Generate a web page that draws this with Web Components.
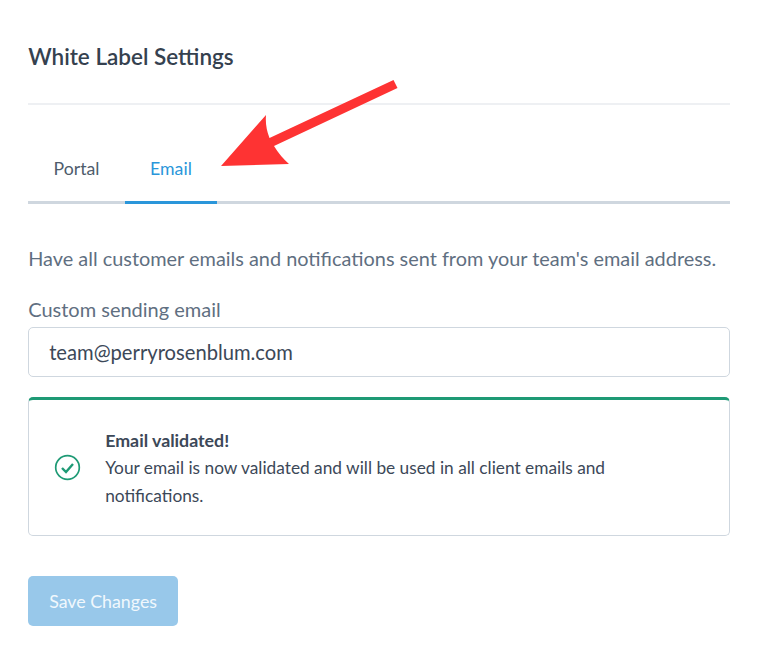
<!DOCTYPE html>
<html>
<head>
<meta charset="utf-8">
<title>White Label Settings</title>
<style>
  html, body { margin: 0; background: #fff; }
  body { font-family: Lato, "Open Sans", sans-serif; color: #3c4858; }
</style>
</head>
<body>
<settings-page>
  <settings-tabs></settings-tabs>
  <email-field slot="field" label="Custom sending email" value="team@perryrosenblum.com"></email-field>
  <validated-alert slot="alert" heading="Email validated!">Your email is now validated and will be used in all client emails and notifications.</validated-alert>
</settings-page>

<script>
class SettingsPage extends HTMLElement {
  constructor() {
    super();
    this.attachShadow({ mode: 'open' });
    this.shadowRoot.innerHTML = /*html*/`
      <style>
        :host {
          display: block;
          position: relative;
          width: 768px;
          height: 668px;
          box-sizing: border-box;
          padding: 0 38px 0 28.200px;
          overflow: hidden;
        }
        h1 {
          margin: 0;
          height: 105px;
          box-sizing: border-box;
          padding-top: 41px;
          font-size: 22.500px;
          line-height: 32px;
          font-weight: 600;
          color: #35414f;
          border-bottom: 2px solid #eef0f3;
        }
        p {
          margin: 0;
          padding-top: 40px;
          font-size: 19.900px;
          line-height: 28px;
          color: #5f6f81;
        }
        .field { display: block; margin-top: 23px; }
        .alert { display: block; margin-top: 20px; }
        button {
          display: block;
          margin-top: 40px;
          width: 149.800px;
          height: 50px;
          padding: 0;
          border: 0;
          border-radius: 5px;
          background: #98c8ea;
          color: #f1f8fd;
          font: 400 17.800px Lato, sans-serif;
        }
        svg { position: absolute; left: 0; top: 0; pointer-events: none; }
      </style>
      <h1>White Label Settings</h1>
      <slot></slot>
      <p>Have all customer emails and notifications sent from your team's email address.</p>
      <slot class="field" name="field"></slot>
      <slot class="alert" name="alert"></slot>
      <button type="button">Save Changes</button>
      <svg width="768" height="668" viewBox="0 0 768 668">
        <path fill="#fe3333" d="M393.500 80 L397.500 88 L274 146 Q280 156 289 164 L221 166 L266 115 Q265 127 269.500 138 Z"/>
      </svg>
    `;
  }
}

class SettingsTabs extends HTMLElement {
  constructor() {
    super();
    this.attachShadow({ mode: 'open' });
    this.shadowRoot.innerHTML = /*html*/`
      <style>
        :host {
          display: flex;
          height: 99px;
          box-sizing: border-box;
          padding-top: 30px;
          border-bottom: 3px solid #cfd7df;
        }
        a {
          display: flex;
          align-items: center;
          justify-content: center;
          height: 69px;
          box-sizing: border-box;
          padding-bottom: 2px;
          font-size: 17.700px;
          color: #4e5c6c;
        }
        .portal { width: 96.800px; }
        .email {
          width: 92px;
          padding-bottom: 0;
          color: #2a96da;
          border-bottom: 3px solid #2a96da;
        }
      </style>
      <a class="portal">Portal</a>
      <a class="email">Email</a>
    `;
  }
}

class EmailField extends HTMLElement {
  constructor() {
    super();
    this.attachShadow({ mode: 'open' });
    this.shadowRoot.innerHTML = /*html*/`
      <style>
        :host { display: block; }
        label {
          display: block;
          font-size: 20px;
          line-height: 28px;
          color: #5f6f81;
          margin-bottom: 4px;
        }
        .box {
          height: 50px;
          box-sizing: border-box;
          padding: 0 20px;
          display: flex;
          align-items: center;
          border: 1px solid #cfd7df;
          border-radius: 5px;
          font-size: 20.200px;
          color: #3c4858;
        }
      </style>
      <label></label>
      <div class="box"></div>
    `;
  }

  connectedCallback() {
    this.shadowRoot.querySelector('label').textContent = this.getAttribute('label');
    this.shadowRoot.querySelector('.box').textContent = this.getAttribute('value');
  }
}

class ValidatedAlert extends HTMLElement {
  constructor() {
    super();
    this.attachShadow({ mode: 'open' });
    this.shadowRoot.innerHTML = /*html*/`
      <style>
        :host {
          display: flex;
          align-items: center;
          height: 139px;
          box-sizing: border-box;
          padding: 0 100px 0 25px;
          border: 1px solid #cfd7df;
          border-top: 3px solid #1e9a75;
          border-radius: 5px;
          font-size: 17.300px;
          line-height: 28px;
          color: #3c4858;
        }
        svg { flex: none; margin-right: 24px; }
        strong { display: block; font-weight: 700; font-size: 17.800px; }
      </style>
      <svg width="27" height="27" viewBox="0 0 27 27" fill="none" stroke="#1e9a75">
        <circle cx="13.500" cy="13.500" r="11.800" stroke-width="1.700"/>
        <path d="M8 14 L12 18 L19 10" stroke-width="2.400"/>
      </svg>
      <div><strong></strong><slot></slot></div>
    `;
  }

  connectedCallback() {
    this.shadowRoot.querySelector('strong').textContent = this.getAttribute('heading');
  }
}

customElements.define('settings-page', SettingsPage);
customElements.define('settings-tabs', SettingsTabs);
customElements.define('email-field', EmailField);
customElements.define('validated-alert', ValidatedAlert);
</script>
</body>
</html>
